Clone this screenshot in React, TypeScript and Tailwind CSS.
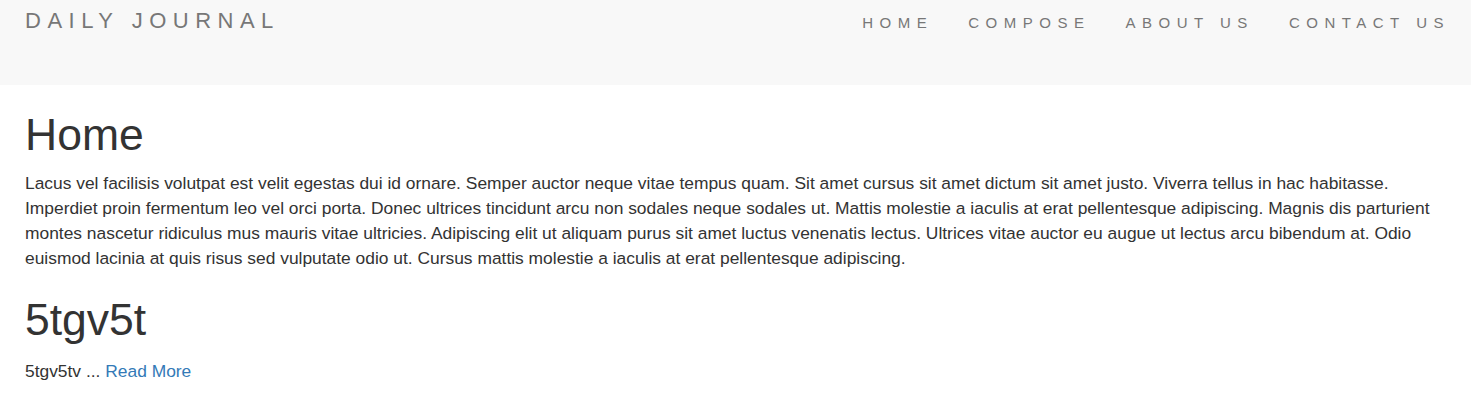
import React from "react";

export default function App() {
  const font = { fontFamily: '"Liberation Sans", Arial, Helvetica, sans-serif' };
  return (
    <div className="min-h-screen bg-white text-[#333]" style={font}>
      <nav className="h-[85px] bg-[#f8f8f8] flex items-start justify-between">
        <a className="ml-[25px] mt-[7px] text-[22px] leading-[28px] tracking-[6.5px] text-[#777]">DAILY JOURNAL</a>
        <ul className="flex mr-[21px] mt-[13px] gap-[35px] text-[15px] leading-[20px] tracking-[6.5px] text-[#777]">
          <li>HOME</li>
          <li>COMPOSE</li>
          <li>ABOUT US</li>
          <li>CONTACT US</li>
        </ul>
      </nav>
      <main className="px-[25px]">
        <h1 className="mt-[24.5px] text-[44.5px] leading-[49px]">Home</h1>
        <p className="mt-[12.5px] text-[17.4px] leading-[25px]">
          Lacus vel facilisis volutpat est velit egestas dui id ornare. Semper auctor neque vitae tempus quam. Sit amet cursus sit amet dictum sit amet justo. Viverra tellus in hac habitasse. Imperdiet proin fermentum leo vel orci porta. Donec ultrices tincidunt arcu non sodales neque sodales ut. Mattis molestie a iaculis at erat pellentesque adipiscing. Magnis dis parturient montes nascetur ridiculus mus mauris vitae ultricies. Adipiscing elit ut aliquam purus sit amet luctus venenatis lectus. Ultrices vitae auctor eu augue ut lectus arcu bibendum at. Odio euismod lacinia at quis risus sed vulputate odio ut. Cursus mattis molestie a iaculis at erat pellentesque adipiscing.
        </p>
        <h1 className="mt-[24px] text-[44.5px] leading-[49px]">5tgv5t</h1>
        <p className="mt-[14.5px] text-[17.4px] leading-[25px]">
          5tgv5tv ... <a className="text-[#337ab7]">Read More</a>
        </p>
      </main>
    </div>
  );
}
